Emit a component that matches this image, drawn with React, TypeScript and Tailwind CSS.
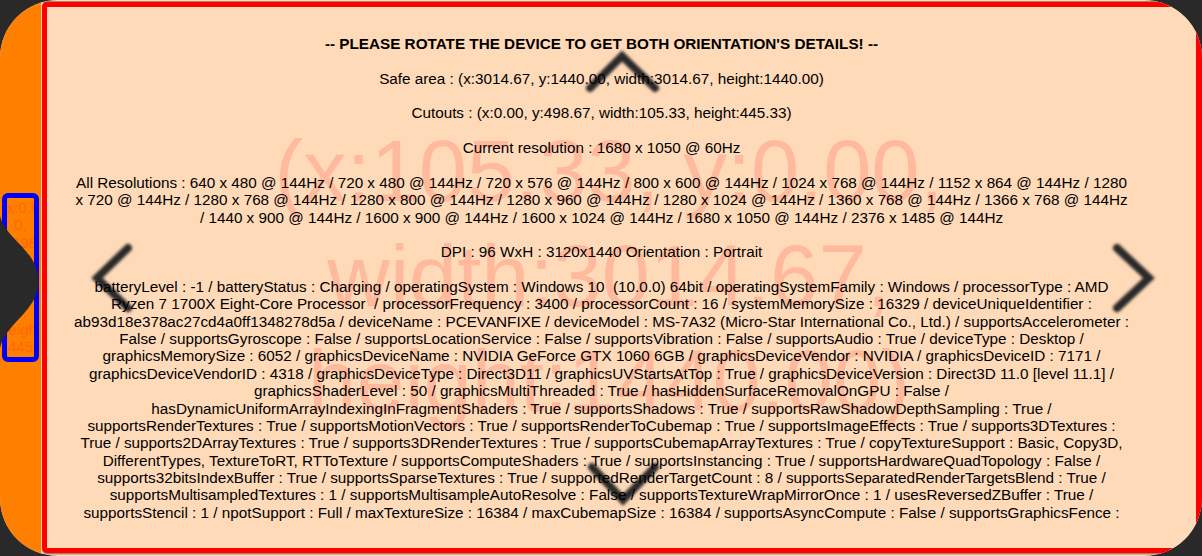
const lines = [
  "Safe area : (x:3014.67, y:1440.00, width:3014.67, height:1440.00)",
  "",
  "Cutouts : (x:0.00, y:498.67, width:105.33, height:445.33)",
  "",
  "Current resolution : 1680 x 1050 @ 60Hz",
  "",
  "All Resolutions : 640 x 480 @ 144Hz / 720 x 480 @ 144Hz / 720 x 576 @ 144Hz / 800 x 600 @ 144Hz / 1024 x 768 @ 144Hz / 1152 x 864 @ 144Hz / 1280",
  "x 720 @ 144Hz / 1280 x 768 @ 144Hz / 1280 x 800 @ 144Hz / 1280 x 960 @ 144Hz / 1280 x 1024 @ 144Hz / 1360 x 768 @ 144Hz / 1366 x 768 @ 144Hz",
  "/ 1440 x 900 @ 144Hz / 1600 x 900 @ 144Hz / 1600 x 1024 @ 144Hz / 1680 x 1050 @ 144Hz / 2376 x 1485 @ 144Hz",
  "",
  "DPI : 96 WxH : 3120x1440 Orientation : Portrait",
  "",
  "batteryLevel : -1 / batteryStatus : Charging / operatingSystem : Windows 10  (10.0.0) 64bit / operatingSystemFamily : Windows / processorType : AMD",
  "Ryzen 7 1700X Eight-Core Processor  / processorFrequency : 3400 / processorCount : 16 / systemMemorySize : 16329 / deviceUniqueIdentifier :",
  "ab93d18e378ac27cd4a0ff1348278d5a / deviceName : PCEVANFIXE / deviceModel : MS-7A32 (Micro-Star International Co., Ltd.) / supportsAccelerometer :",
  "False / supportsGyroscope : False / supportsLocationService : False / supportsVibration : False / supportsAudio : True / deviceType : Desktop /",
  "graphicsMemorySize : 6052 / graphicsDeviceName : NVIDIA GeForce GTX 1060 6GB / graphicsDeviceVendor : NVIDIA / graphicsDeviceID : 7171 /",
  "graphicsDeviceVendorID : 4318 / graphicsDeviceType : Direct3D11 / graphicsUVStartsAtTop : True / graphicsDeviceVersion : Direct3D 11.0 [level 11.1] /",
  "graphicsShaderLevel : 50 / graphicsMultiThreaded : True / hasHiddenSurfaceRemovalOnGPU : False /",
  "hasDynamicUniformArrayIndexingInFragmentShaders : True / supportsShadows : True / supportsRawShadowDepthSampling : True /",
  "supportsRenderTextures : True / supportsMotionVectors : True / supportsRenderToCubemap : True / supportsImageEffects : True / supports3DTextures :",
  "True / supports2DArrayTextures : True / supports3DRenderTextures : True / supportsCubemapArrayTextures : True / copyTextureSupport : Basic, Copy3D,",
  "DifferentTypes, TextureToRT, RTToTexture / supportsComputeShaders : True / supportsInstancing : True / supportsHardwareQuadTopology : False /",
  "supports32bitsIndexBuffer : True / supportsSparseTextures : True / supportedRenderTargetCount : 8 / supportsSeparatedRenderTargetsBlend : True /",
  "supportsMultisampledTextures : 1 / supportsMultisampleAutoResolve : False / supportsTextureWrapMirrorOnce : 1 / usesReversedZBuffer : True /",
  "supportsStencil : 1 / npotSupport : Full / maxTextureSize : 16384 / maxCubemapSize : 16384 / supportsAsyncCompute : False / supportsGraphicsFence :",
];

const cutoutLines = ["(x:0.0", "0,", "y:498.", "67,", "width:", "105.3", "3,", "height", ":445."];

const chevrons = [
  "M590 88 L622 56 L655 88",
  "M592 467 L623 500 L655 467",
  "M128 248 L97 278 L128 308",
  "M1117 248 L1149 278 L1117 308",
];

export default function App() {
  return (
    <div className="relative flex h-[556px] w-[1202px] overflow-hidden bg-[#292929]" style={{ fontFamily: '"Liberation Sans", Arial, sans-serif' }}>
      <div className="relative flex h-full w-full overflow-hidden rounded-[58px] bg-[#ffdab9] pt-[2px]">
        <div className="relative mt-[-2px] w-[41px] shrink-0 bg-[#ff8000]">
          <div className="absolute left-[2px] top-[193px] flex h-[169px] w-[37px] flex-col items-center overflow-hidden rounded-[6px] border-[5px] border-[#0000ff] pt-[1px] text-[15.27px] leading-[17.37px] text-[#ff0000]/20">
            {cutoutLines.map((l) => (
              <div key={l} className="shrink-0 whitespace-nowrap">{l}</div>
            ))}
          </div>
        </div>
        <div className="ml-[1px] h-[551px] min-w-0 flex-1 rounded-[5px] border-[5px] border-r-[6px] border-[#ff0000] bg-[#ffdab9] pr-[40px] pt-[28px] text-center text-[15.27px] leading-[17.37px] text-black shadow-[0_-1px_0_#a5806a,0_1.5px_0_#a5806a]">
          <div className="relative z-10">
            <div className="whitespace-nowrap font-bold">-- PLEASE ROTATE THE DEVICE TO GET BOTH ORIENTATION'S DETAILS! --</div>
            <div className="h-[17.37px]" />
            {lines.map((l, i) => (
              <div key={i} className="h-[17.37px] whitespace-pre">{l}</div>
            ))}
          </div>
        </div>
        <div className="pointer-events-none absolute inset-0 flex flex-col items-center pl-[16px] pt-[119px] text-[86.6px] leading-[105px] text-[#ff0000]/15">
          <div className="whitespace-nowrap">(x:105.33, y:0.00,</div>
          <div className="whitespace-nowrap">width:3014.67,</div>
          <div className="whitespace-nowrap">height:1440.00)</div>
        </div>
        <svg className="pointer-events-none absolute inset-0 blur-[1.5px]" width="1202" height="556" viewBox="0 0 1202 556" fill="none">
          {chevrons.map((d) => (
            <path key={d} d={d} stroke="#292929" strokeWidth="8" strokeLinecap="round" strokeLinejoin="miter" />
          ))}
        </svg>
        <svg className="pointer-events-none absolute left-0 top-0" width="45" height="556" viewBox="0 0 45 556">
          <path d="M0 216 C6 240 38 250 38.5 281 C38 312 6 322 0 348 Z" fill="#292929" />
        </svg>
      </div>
    </div>
  );
}
